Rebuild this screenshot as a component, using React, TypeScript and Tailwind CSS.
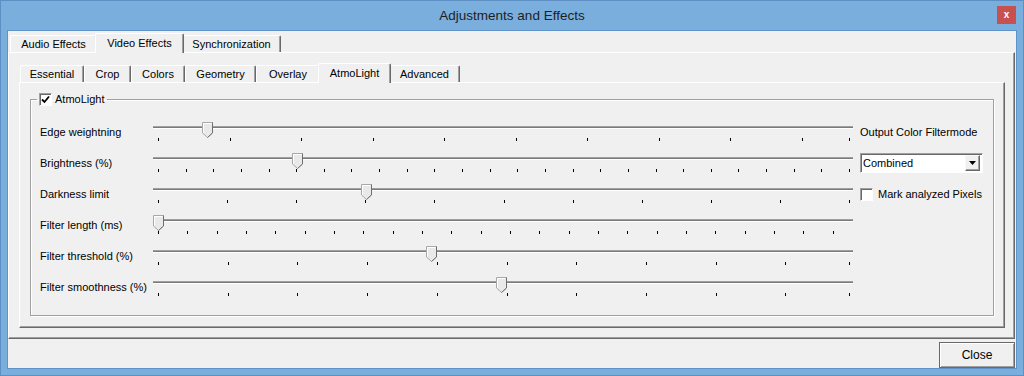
import React from "react";

const range = (n: number, start: number, step: number) =>
  Array.from({ length: n }, (_, i) => start + i * step);

// x positions are window coordinates; the track starts at x=153
const TRACK_X = 153;

const sliders = [
  { label: "Edge weightning", thumb: 207, ticks: [...range(10, 158, 71.5), 849] },
  { label: "Brightness (%)", thumb: 297, ticks: range(26, 158, 691 / 25) },
  { label: "Darkness limit", thumb: 366, ticks: range(11, 158, 69.1) },
  { label: "Filter length (ms)", thumb: 158, ticks: range(24, 158, 29.34) },
  { label: "Filter threshold (%)", thumb: 431, ticks: [...range(10, 158, 69.7), 849] },
  { label: "Filter smoothness (%)", thumb: 501, ticks: [...range(10, 158, 69.7), 849] },
];

const topTabs = [
  { label: "Audio Effects", w: "w-[87px]", wActive: "w-[91px]" },
  { label: "Video Effects", w: "w-[85px]", wActive: "w-[89px]", active: true },
  { label: "Synchronization", w: "w-[99px]", wActive: "w-[103px]" },
];

const subTabs = [
  { label: "Essential", w: "w-[64px]", wActive: "w-[68px]" },
  { label: "Crop", w: "w-[47px]", wActive: "w-[51px]" },
  { label: "Colors", w: "w-[54px]", wActive: "w-[58px]" },
  { label: "Geometry", w: "w-[71px]", wActive: "w-[75px]" },
  { label: "Overlay", w: "w-[64px]", wActive: "w-[68px]" },
  { label: "AtmoLight", w: "w-[69px]", wActive: "w-[73px]", active: true },
  { label: "Advanced", w: "w-[71px]", wActive: "w-[75px]" },
];

function Tab({ label, w, wActive, active }: { label: string; w: string; wActive: string; active?: boolean }) {
  if (active) {
    return (
      <div
        className={`relative z-10 -mx-[2px] mb-[-1px] flex h-[20px] items-center justify-center rounded-t-[2px] border-l border-t border-r border-l-white border-t-white border-r-[#696969] bg-[#f0f0f0] pb-[1px] shadow-[inset_-1px_0_0_#a0a0a0] ${wActive}`}
      >
        {label}
      </div>
    );
  }
  return (
    <div
      className={`flex h-[17px] items-center justify-center rounded-t-[2px] border-l border-t border-r border-l-white border-t-white border-r-[#696969] pt-[1px] shadow-[inset_-1px_0_0_#a0a0a0] ${w}`}
    >
      {label}
    </div>
  );
}

function Thumb({ left }: { left: number }) {
  return (
    <svg
      className="absolute top-[3px]"
      style={{ left }}
      width="11"
      height="16"
      viewBox="0 0 11 16"
    >
      <path d="M0.5 0.5H10.5V11L5.5 15.5L0.5 11Z" fill="#e9e9e9" stroke="#a8a8a8" />
      <path d="M1.5 10.6V1.5H9.5" fill="none" stroke="#ffffff" />
      <path d="M10.5 0.5V11L5.5 15.5" fill="none" stroke="#6e6e6e" />
    </svg>
  );
}

function Slider({ thumb, ticks }: { thumb: number; ticks: number[] }) {
  return (
    <div className="relative h-[31px] w-[700px]">
      <div className="mt-[7px] h-px bg-[#a0a0a0]" />
      <div className="h-px bg-[#7a7a7a]" />
      <div className="h-px bg-white" />
      {ticks.map((t) => (
        <div
          key={t}
          className="absolute top-[19px] h-[3px] w-px bg-black"
          style={{ left: Math.round(t - TRACK_X) }}
        />
      ))}
      <Thumb left={thumb - TRACK_X - 5} />
    </div>
  );
}

function CheckBox({ checked }: { checked?: boolean }) {
  return (
    <div className="flex h-[13px] w-[13px] items-center justify-center border border-t-[#a0a0a0] border-l-[#a0a0a0] border-b-white border-r-white bg-white shadow-[inset_1px_1px_0_#696969]">
      {checked && (
        <svg width="9" height="9" viewBox="0 0 9 9">
          <path d="M1 4.5L3.5 7L8 1.5" fill="none" stroke="#000" strokeWidth="1.8" />
        </svg>
      )}
    </div>
  );
}

function ComboBox() {
  return (
    <div className="flex h-[20px] w-[123px] items-center justify-between border border-t-[#a0a0a0] border-l-[#a0a0a0] border-b-white border-r-white bg-white pl-[2px] pr-[2px] shadow-[inset_1px_1px_0_#696969]">
      <span>Combined</span>
      <div className="flex h-[16px] w-[15px] items-center justify-center border border-t-[#f8f8f8] border-l-[#f8f8f8] border-b-[#696969] border-r-[#696969] bg-[#f0f0f0] shadow-[inset_-1px_-1px_0_#a0a0a0]">
        <svg width="7" height="4" viewBox="0 0 7 4">
          <path d="M0 0H7L3.5 4Z" fill="#000" />
        </svg>
      </div>
    </div>
  );
}

export default function App() {
  return (
    <div className="relative flex h-[376px] w-[1024px] flex-col border border-[#5d8fc5] bg-[#7aaedc] font-['Liberation_Sans',Arial,sans-serif] text-[11px] text-black">
      {/* title bar */}
      <div className="relative flex h-[29px] items-center justify-center pt-[1px]">
        <span className="text-[13.5px] text-[#1e1e1e]">Adjustments and Effects</span>
        <div className="absolute right-[7px] top-[5px] flex h-[18px] w-[19px] items-center justify-center bg-[#c75050] pb-[1px] text-[10px] font-bold leading-none text-white">
          x
        </div>
      </div>

      {/* client area */}
      <div className="mx-[6px] h-[339px] border border-[#5f93c9] bg-[#f0f0f0]">
        <div className="flex w-[1007px] flex-col">
          <div className="flex h-[21px] items-end pl-[2px] pt-[2px]">
            {topTabs.map((t) => (
              <Tab key={t.label} {...t} />
            ))}
          </div>

          <div className="border border-l-white border-t-white border-b-[#696969] border-r-[#696969] pb-[10px] pl-[10px] pr-[9px] pt-[10px] shadow-[inset_-1px_-1px_0_#a0a0a0]">
            <div className="flex h-[19px] items-end pl-[1px]">
              {subTabs.map((t) => (
                <Tab key={t.label} {...t} />
              ))}
            </div>

            <div className="border border-l-white border-t-white border-b-[#696969] border-r-[#696969] px-[10px] pb-[11px] pt-[9px] shadow-[inset_-1px_-1px_0_#a0a0a0]">
              <fieldset className="border border-[#a0a0a0] shadow-[inset_1px_1px_0_#ffffff,1px_1px_0_#ffffff]">
                <legend className="ml-[6px] px-[2px]">
                  <div className="flex h-[14px] items-center gap-[3px] leading-[14px]">
                    <CheckBox checked />
                    <span>AtmoLight</span>
                  </div>
                </legend>
                <div className="flex pb-[10px] pl-[9px] pt-[13px]">
                  <div className="flex flex-col">
                    {sliders.map((s) => (
                      <div key={s.label} className="flex h-[31px]">
                        <div className="w-[113px] pt-[6px] leading-[14px]">{s.label}</div>
                        <Slider thumb={s.thumb} ticks={s.ticks} />
                      </div>
                    ))}
                  </div>
                  <div className="ml-[7px] flex flex-col pt-[6px]">
                    <div className="leading-[14px]">Output Color Filtermode</div>
                    <div className="mt-[14px]">
                      <ComboBox />
                    </div>
                    <div className="mt-[14px] flex items-center gap-[5px] leading-[14px]">
                      <CheckBox />
                      <span>Mark analyzed Pixels</span>
                    </div>
                  </div>
                </div>
              </fieldset>
            </div>
          </div>

          <div className="flex justify-end pt-[3px]">
            <div className="flex h-[26px] w-[76px] items-center justify-center border border-[#696969] bg-[#f0f0f0] text-[12px] shadow-[inset_1px_1px_0_#ffffff,inset_-1px_-1px_0_#a0a0a0]">
              Close
            </div>
          </div>
        </div>
      </div>
    </div>
  );
}
